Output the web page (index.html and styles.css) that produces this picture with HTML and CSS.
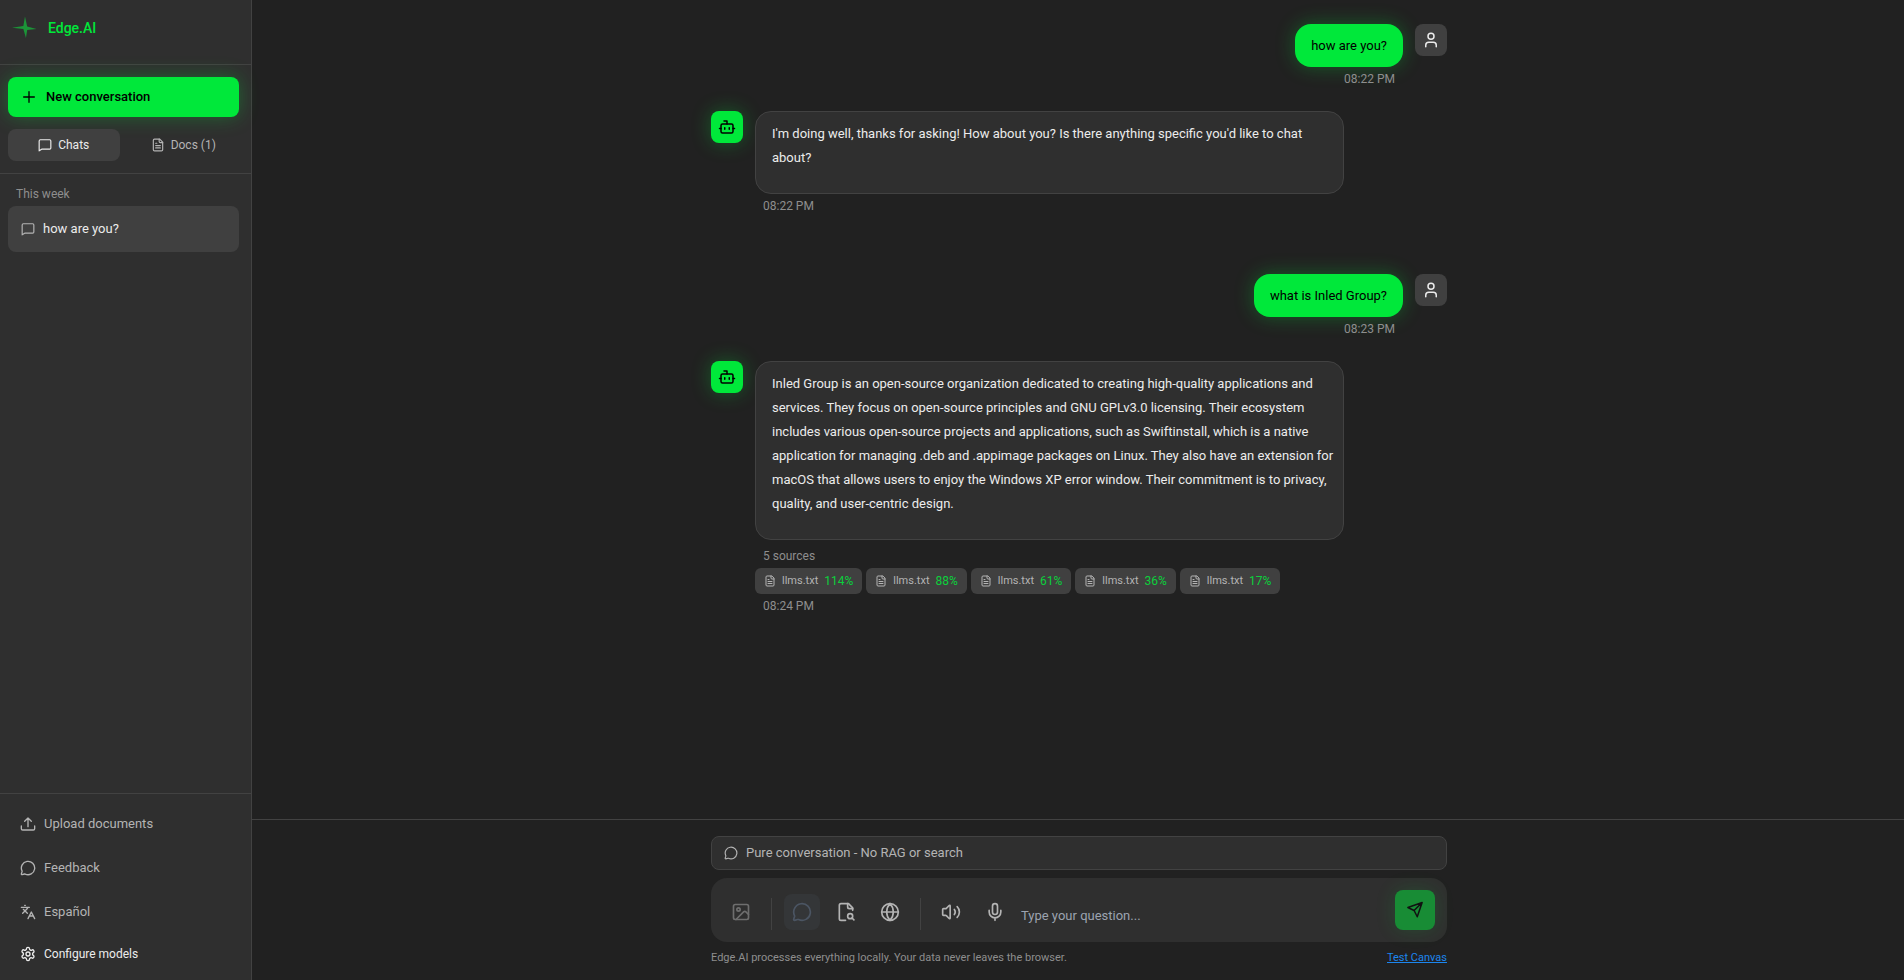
FILE: index.html
```html
<!DOCTYPE html>
<html lang="en">
<head>
<meta charset="utf-8">
<title>Edge.AI</title>
<meta name="viewport" content="width=device-width, initial-scale=1">
<link rel="stylesheet" href="styles.css">
</head>
<body>

<!-- shared icons -->
<svg class="sprite" aria-hidden="true">
    <symbol id="i-square" viewBox="0 0 24 24"><path d="M22 17a2 2 0 0 1-2 2H7l-5 3V5a2 2 0 0 1 2-2h16a2 2 0 0 1 2 2z"/></symbol>
    <symbol id="i-circle" viewBox="0 0 24 24"><path d="M3 16.300a2 2 0 0 1 .1 1.100L2 20.800a1 1 0 0 0 1.200 1.200l3.500-1a2 2 0 0 1 1.100.1A10 10 0 1 0 3 16.300"/></symbol>
    <symbol id="i-file" viewBox="0 0 24 24"><path d="M15 2H6a2 2 0 0 0-2 2v16a2 2 0 0 0 2 2h12a2 2 0 0 0 2-2V7Z"/><path d="M14 2v4a2 2 0 0 0 2 2h4M10 9H8M16 13H8M16 17H8"/></symbol>
    <symbol id="i-bot" viewBox="0 0 24 24"><path d="M12 8V4H8"/><rect width="16" height="12" x="4" y="8" rx="2"/><path d="M2 14h2M20 14h2M15 13v2M9 13v2"/></symbol>
    <symbol id="i-user" viewBox="0 0 24 24"><path d="M19 21v-2a4 4 0 0 0-4-4H9a4 4 0 0 0-4 4v2"/><circle cx="12" cy="7" r="4"/></symbol>
</svg>

<div class="app">
    <aside class="sidebar">
        <div class="brand">
            <svg class="logo" viewBox="0 0 26 24"><path d="M13.500 0 L15.800 10.500 L25.500 13 L15.800 14 L14.500 22.500 L11.800 13 L0 11.700 L11.800 10 Z"/></svg>
            <span class="brand-name">Edge.AI</span>
        </div>

        <div class="sidebar-top">
            <button class="new-chat" type="button">
                <svg class="icon icon-16" viewBox="0 0 24 24"><path d="M4 12h16M12 4v16"/></svg>
                New conversation
            </button>
            <div class="tabs">
                <button class="tab active" type="button"><svg class="icon icon-14"><use href="#i-square"/></svg>Chats</button>
                <button class="tab" type="button"><svg class="icon icon-14"><use href="#i-file"/></svg>Docs (1)</button>
            </div>
        </div>

        <nav class="history">
            <h2 class="history-title">This week</h2>
            <button class="history-item" type="button"><svg class="icon icon-14"><use href="#i-square"/></svg>how are you?</button>
        </nav>

        <div class="sidebar-bottom">
            <button class="side-link" type="button"><svg class="icon icon-16" viewBox="0 0 24 24"><path d="M12 16V3M7 8l5-5 5 5M2 15v4a2 2 0 0 0 2 2h16a2 2 0 0 0 2-2v-4"/></svg>Upload documents</button>
            <button class="side-link" type="button"><svg class="icon icon-16"><use href="#i-circle"/></svg>Feedback</button>
            <button class="side-link" type="button"><svg class="icon icon-16" viewBox="0 0 24 24"><path d="m5 8 6 6M4 14l6-6 2-3M2 5h12M7 2h1M22 22l-5-10-5 10M14 18h6"/></svg>Español</button>
            <button class="side-link config" type="button"><svg class="icon icon-16" viewBox="0 0 24 24"><path d="M12.220 2h-.44a2 2 0 0 0-2 2v.18a2 2 0 0 1-1 1.730l-.43.25a2 2 0 0 1-2 0l-.15-.08a2 2 0 0 0-2.730.73l-.22.38a2 2 0 0 0 .73 2.730l.15.1a2 2 0 0 1 1 1.720v.51a2 2 0 0 1-1 1.740l-.15.09a2 2 0 0 0-.73 2.730l.22.38a2 2 0 0 0 2.730.73l.15-.08a2 2 0 0 1 2 0l.43.25a2 2 0 0 1 1 1.730V20a2 2 0 0 0 2 2h.44a2 2 0 0 0 2-2v-.18a2 2 0 0 1 1-1.730l.43-.25a2 2 0 0 1 2 0l.15.08a2 2 0 0 0 2.730-.73l.22-.39a2 2 0 0 0-.73-2.730l-.15-.08a2 2 0 0 1-1-1.740v-.5a2 2 0 0 1 1-1.740l.15-.09a2 2 0 0 0 .73-2.730l-.22-.38a2 2 0 0 0-2.730-.73l-.15.08a2 2 0 0 1-2 0l-.43-.25a2 2 0 0 1-1-1.730V4a2 2 0 0 0-2-2z"/><circle cx="12" cy="12" r="3"/></svg>Configure models</button>
        </div>
    </aside>

    <main class="main">
        <div class="chat">
            <div class="column">
                <div class="message user">
                    <div class="body">
                        <div class="bubble">how are you?</div>
                        <div class="time">08:22 PM</div>
                    </div>
                    <div class="avatar"><svg class="icon icon-18"><use href="#i-user"/></svg></div>
                </div>
                <div class="message bot">
                    <div class="avatar"><svg class="icon icon-18"><use href="#i-bot"/></svg></div>
                    <div class="body">
                        <div class="bubble"><p>I'm doing well, thanks for asking! How about you? Is there anything specific you'd like to chat about?</p></div>
                        <div class="time">08:22 PM</div>
                    </div>
                </div>
                <div class="message user">
                    <div class="body">
                        <div class="bubble">what is Inled Group?</div>
                        <div class="time">08:23 PM</div>
                    </div>
                    <div class="avatar"><svg class="icon icon-18"><use href="#i-user"/></svg></div>
                </div>
                <div class="message bot">
                    <div class="avatar"><svg class="icon icon-18"><use href="#i-bot"/></svg></div>
                    <div class="body">
                        <div class="bubble"><p>Inled Group is an open-source organization dedicated to creating high-quality applications and services. They focus on open-source principles and GNU GPLv3.0 licensing. Their ecosystem includes various open-source projects and applications, such as Swiftinstall, which is a native application for managing .deb and .appimage packages on Linux. They also have an extension for macOS that allows users to enjoy the Windows XP error window. Their commitment is to privacy, quality, and user-centric design.</p></div>
                        <div class="sources-label">5 sources</div>
                        <div class="sources">
                            <span class="source"><svg class="icon icon-12"><use href="#i-file"/></svg>llms.txt <span class="score">114%</span></span>
                            <span class="source"><svg class="icon icon-12"><use href="#i-file"/></svg>llms.txt <span class="score">88%</span></span>
                            <span class="source"><svg class="icon icon-12"><use href="#i-file"/></svg>llms.txt <span class="score">61%</span></span>
                            <span class="source"><svg class="icon icon-12"><use href="#i-file"/></svg>llms.txt <span class="score">36%</span></span>
                            <span class="source"><svg class="icon icon-12"><use href="#i-file"/></svg>llms.txt <span class="score">17%</span></span>
                        </div>
                        <div class="time">08:24 PM</div>
                    </div>
                </div>
            </div>
        </div>

        <div class="dock">
            <div class="column">
                <div class="mode"><svg class="icon icon-14"><use href="#i-circle"/></svg>Pure conversation - No RAG or search</div>
                <form class="composer">
                    <button class="tool" type="button" aria-label="Attach image" disabled><svg class="icon icon-20" viewBox="0 0 24 24"><rect width="18" height="18" x="3" y="3" rx="2"/><circle cx="9" cy="9" r="2"/><path d="m21 15-3.090-3.090a2 2 0 0 0-2.820 0L6 21"/></svg></button>
                    <span class="divider"></span>
                    <button class="tool active" type="button" aria-label="Conversation"><svg class="icon icon-20"><use href="#i-circle"/></svg></button>
                    <button class="tool" type="button" aria-label="Search documents"><svg class="icon icon-20" viewBox="0 0 24 24"><path d="M14 2v4a2 2 0 0 0 2 2h4"/><path d="M20 10V7l-5-5H6a2 2 0 0 0-2 2v16a2 2 0 0 0 2 2h5.500"/><circle cx="17" cy="17" r="3"/><path d="m21.500 21.500-2.300-2.300"/></svg></button>
                    <button class="tool" type="button" aria-label="Search the web"><svg class="icon icon-20" viewBox="0 0 24 24"><circle cx="12" cy="12" r="10"/><path d="M12 2a14.500 14.500 0 0 0 0 20 14.500 14.500 0 0 0 0-20M2 12h20"/></svg></button>
                    <span class="divider"></span>
                    <button class="tool" type="button" aria-label="Read aloud"><svg class="icon icon-20" viewBox="0 0 24 24"><path d="M11 4.700a.7.7 0 0 0-1.200-.5L6.400 7.600A1.400 1.400 0 0 1 5.400 8H3a1 1 0 0 0-1 1v6a1 1 0 0 0 1 1h2.400a1.400 1.400 0 0 1 1 .4l3.400 3.400a.7.7 0 0 0 1.200-.5zM16 9a5 5 0 0 1 0 6M19.400 18.400a9 9 0 0 0 0-12.800"/></svg></button>
                    <button class="tool" type="button" aria-label="Dictate"><svg class="icon icon-20" viewBox="0 0 24 24"><path d="M12 19v3M19 10v2a7 7 0 0 1-14 0v-2"/><rect x="9" y="2" width="6" height="13" rx="3"/></svg></button>
                    <textarea class="question" rows="1" placeholder="Type your question..." aria-label="Type your question"></textarea>
                    <button class="send" type="submit" aria-label="Send"><svg class="icon icon-18" viewBox="0 0 24 24"><path d="M2.500 8.700 21.500 2 15 21 10.800 12.700Z M10.800 12.700 21.500 2"/></svg></button>
                </form>
                <div class="note">
                    <span>Edge.AI processes everything locally. Your data never leaves the browser.</span>
                    <a href="#canvas">Test Canvas</a>
                </div>
            </div>
        </div>
    </main>
</div>

</body>
</html>
```
FILE: styles.css
```css
* {
    box-sizing: border-box;
}
body {
    margin: 0;
    background: #212121;
    color: #ececec;
    font: 13px/20px Roboto, "Liberation Sans", sans-serif;
}
button, textarea {
    border: none;
    background: none;
    color: inherit;
    font: inherit;
}
button {
    display: flex;
    align-items: center;
    cursor: pointer;
}
p {
    margin: 0 0 12px;
}
.sprite {
    position: absolute;
    width: 0;
    height: 0;
}
.icon {
    flex: none;
    fill: none;
    stroke: currentColor;
    stroke-width: 2;
    stroke-linecap: round;
    stroke-linejoin: round;
}
.icon-12 { width: 12px; height: 12px; }
.icon-14 { width: 14px; height: 14px; }
.icon-16 { width: 16px; height: 16px; }
.icon-18 { width: 18px; height: 18px; }
.icon-20 { width: 20px; height: 20px; }

.app {
    display: flex;
    height: 100vh;
}

/* sidebar */
.sidebar {
    display: flex;
    flex-direction: column;
    flex: none;
    width: 252px;
    background: #2f2f2f;
    border-right: 1px solid #424242;
}
.brand {
    display: flex;
    align-items: center;
    gap: 11px;
    height: 65px;
    padding: 0 12px 8px;
    border-bottom: 1px solid #424242;
}
.logo {
    width: 25px;
    height: 24px;
    fill: #1c9438;
}
.brand-name {
    color: #00e83a;
    font-size: 14px;
    font-weight: 500;
}
.sidebar-top {
    padding: 12px 12px 12px 8px;
    border-bottom: 1px solid #424242;
}
.new-chat {
    width: 100%;
    height: 40px;
    gap: 9px;
    padding: 0 13px;
    border-radius: 8px;
    background: #00e83a;
    box-shadow: 0 0 20px rgba(0, 232, 58, 0.3);
    color: #000;
    font-weight: 500;
}
.tabs {
    display: flex;
    gap: 8px;
    margin-top: 12px;
}
.tab {
    flex: 1;
    justify-content: center;
    gap: 6px;
    height: 32px;
    padding: 0;
    border-radius: 8px;
    color: #b4b4b4;
    font-size: 12px;
}
.tab.active {
    background: #404040;
    color: #ececec;
}
.history {
    flex: 1;
    padding: 12px 12px 12px 8px;
}
.history-title {
    margin: 0 0 4px;
    padding: 0 8px;
    color: #8e8e8e;
    font-size: 12px;
    line-height: 16px;
    font-weight: 400;
}
.history-item {
    width: 100%;
    height: 46px;
    gap: 8px;
    padding: 0 13px;
    border-radius: 8px;
    background: #404040;
}
.history-item .icon {
    color: #b4b4b4;
}
.sidebar-bottom {
    padding: 8px 12px 6px 8px;
    border-top: 1px solid #424242;
}
.side-link {
    width: 100%;
    height: 44px;
    gap: 8px;
    padding: 0 12px;
    color: #b4b4b4;
}
.config {
    height: 40px;
    color: #ececec;
    font-size: 12px;
}

/* conversation */
.main {
    display: flex;
    flex-direction: column;
    flex: 1;
    min-width: 0;
}
.column {
    max-width: 736px;
    margin: 0 auto;
}
.chat {
    flex: 1;
    overflow: auto;
    padding: 24px 16px 24px 18px;
}
.message {
    display: flex;
    gap: 12px;
}
.user {
    justify-content: flex-end;
    margin-bottom: 24px;
}
.bot {
    margin-bottom: 60px;
}
.avatar {
    display: flex;
    flex: none;
    align-items: center;
    justify-content: center;
    width: 32px;
    height: 32px;
    border-radius: 8px;
    background: #404040;
}
.bot .avatar {
    background: #00e83a;
    box-shadow: 0 0 20px rgba(0, 232, 58, 0.3);
    color: #000;
}
.body {
    max-width: 80%;
}
.bubble {
    border-radius: 16px;
}
.user .bubble {
    padding: 12px 16px;
    background: #00e83a;
    box-shadow: 0 0 20px rgba(0, 232, 58, 0.3);
    color: #000;
    line-height: 19px;
}
.bot .bubble {
    padding: 10px 8px 11px 16px;
    border: 1px solid #424242;
    background: #2f2f2f;
    line-height: 24px;
}
.time, .sources-label {
    margin-top: 4px;
    padding: 0 8px;
    color: #8e8e8e;
    font-size: 12px;
    line-height: 16px;
}
.user .time {
    text-align: right;
}
.sources-label {
    margin: 8px 0 4px;
}
.sources {
    display: flex;
    flex-wrap: wrap;
    gap: 4px;
}
.source {
    display: flex;
    align-items: center;
    gap: 6px;
    height: 26px;
    padding: 0 9px;
    border-radius: 6px;
    background: #404040;
    color: #b4b4b4;
    font-size: 11px;
}
.score {
    color: #0bd03c;
    font-size: 12px;
}

/* input area */
.dock {
    padding: 16px 16px 14px 18px;
    border-top: 1px solid #424242;
}
.mode {
    display: flex;
    align-items: center;
    gap: 8px;
    height: 34px;
    padding: 0 12px;
    border: 1px solid #424242;
    border-radius: 8px;
    background: #2f2f2f;
    color: #b4b4b4;
}
.composer {
    display: flex;
    align-items: flex-end;
    gap: 8px;
    margin-top: 8px;
    padding: 12px;
    border-radius: 16px;
    background: #2f2f2f;
}
.tool {
    flex: none;
    justify-content: center;
    width: 36px;
    height: 36px;
    padding: 0;
    border-radius: 8px;
    color: #b4b4b4;
}
.tool:disabled {
    color: #6e6e6e;
}
.tool.active {
    background: #343638;
    color: #4b5563;
}
.divider {
    flex: none;
    width: 1px;
    height: 32px;
    margin: 0 4px;
    background: #424242;
}
.question {
    flex: 1;
    min-width: 0;
    height: 36px;
    padding: 12px 0 4px;
    outline: none;
    resize: none;
}
.question::placeholder {
    color: #9ca3af;
}
.send {
    flex: none;
    justify-content: center;
    width: 40px;
    height: 40px;
    padding: 0;
    border-radius: 8px;
    background: #188c35;
    box-shadow: 0 0 20px rgba(0, 232, 58, 0.15);
    color: #111;
}
.note {
    display: flex;
    justify-content: space-between;
    margin-top: 8px;
    color: #8e8e8e;
    font-size: 11px;
    line-height: 16px;
}
.note a {
    color: #1c86ee;
}
```
